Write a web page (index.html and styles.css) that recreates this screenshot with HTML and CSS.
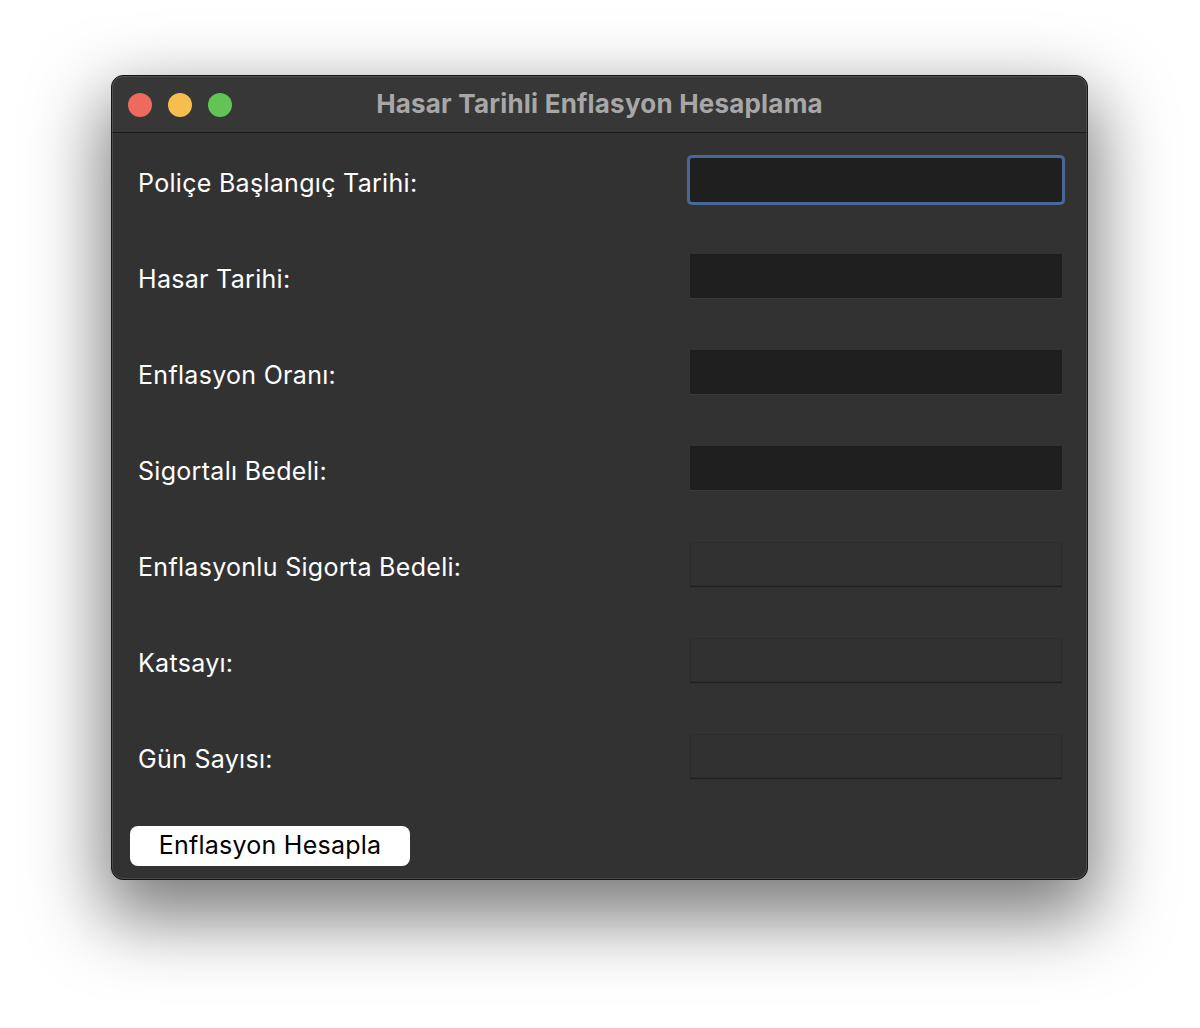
FILE: index.html
```html
<!DOCTYPE html>
<html lang="tr">
<head>
<meta charset="utf-8">
<title>Hasar Tarihli Enflasyon Hesaplama</title>
<link rel="stylesheet" href="styles.css">
</head>
<body>
<div class="stage">
  <div class="window">
    <div class="titlebar">
      <div class="lights">
        <span class="light red"></span>
        <span class="light yellow"></span>
        <span class="light green"></span>
      </div>
      <div class="title">Hasar Tarihli Enflasyon Hesaplama</div>
      <div></div>
    </div>
    <div class="content">
      <div class="form">
        <label class="label">Poliçe Başlangıç Tarihi:</label>
        <div class="field focused"></div>
        <label class="label">Hasar Tarihi:</label>
        <div class="field"></div>
        <label class="label">Enflasyon Oranı:</label>
        <div class="field"></div>
        <label class="label">Sigortalı Bedeli:</label>
        <div class="field"></div>
        <label class="label">Enflasyonlu Sigorta Bedeli:</label>
        <div class="field disabled"></div>
        <label class="label">Katsayı:</label>
        <div class="field disabled"></div>
        <label class="label">Gün Sayısı:</label>
        <div class="field disabled"></div>
      </div>
      <button class="btn">Enflasyon Hesapla</button>
    </div>
  </div>
</div>
</body>
</html>
```

FILE: styles.css
```css
* { box-sizing: border-box; }
html, body {
  margin: 0;
  padding: 0;
  background: #ffffff;
  font-family: Inter, "Noto Sans", "DejaVu Sans", sans-serif;
}
.stage {
  padding: 75px 0 0 111px;
  height: 1028px;
}
.window {
  position: relative;
  width: 977px;
  height: 805px;
  border: 1px solid #141414;
  border-radius: 12px;
  overflow: hidden;
  background: #323232;
  box-shadow: 0 30px 72px 8px rgba(0, 0, 0, 0.52);
}
.window::after {
  content: "";
  position: absolute;
  inset: 0;
  border: 1px solid rgba(255, 255, 255, 0.13);
  border-radius: 11px;
  pointer-events: none;
}
.titlebar {
  height: 57px;
  background: #373737;
  border-bottom: 1px solid #1a1a1a;
  display: grid;
  grid-template-columns: 1fr auto 1fr;
  align-items: center;
}
.lights {
  display: flex;
  gap: 16px;
  padding-left: 16px;
  padding-top: 1px;
}
.light {
  width: 24px;
  height: 24px;
  border-radius: 50%;
  display: block;
}
.red { background: #ee6a5f; }
.yellow { background: #f5be4f; }
.green { background: #61c454; }
.title {
  color: #a7a7a7;
  font-weight: 700;
  font-size: 26px;
  letter-spacing: 0.2px;
  line-height: 30px;
}
.content {
  padding: 25px 25px 13px 26px;
  display: flex;
  flex-direction: column;
  align-items: flex-start;
}
.form {
  width: 100%;
  display: grid;
  grid-template-columns: 1fr 372px;
  row-gap: 52px;
  align-items: center;
}
.label {
  color: #ffffff;
  font-size: 25px;
  letter-spacing: 0.3px;
  line-height: 44px;
  padding-top: 3px;
  height: 44px;
}
.field {
  height: 44px;
  background: #1f1f1f;
  box-shadow: 0 1px 0 rgba(255, 255, 255, 0.04);
}
.field.focused {
  border-radius: 2px;
  box-shadow: 0 0 0 3px #48689a;
}
.field.disabled {
  background: #313131;
  border: 1px solid #2c2c2c;
  box-shadow: 0 1px 1px rgba(0, 0, 0, 0.35);
}
.btn {
  margin: 48px 0 0 -8px;
  width: 280px;
  height: 40px;
  border: none;
  border-radius: 8px;
  background: #ffffff;
  color: #000000;
  font-family: Inter, "Noto Sans", sans-serif;
  font-size: 25px;
  letter-spacing: 0.25px;
  line-height: 36px;
  padding: 0 0 3px 0;
}
```
